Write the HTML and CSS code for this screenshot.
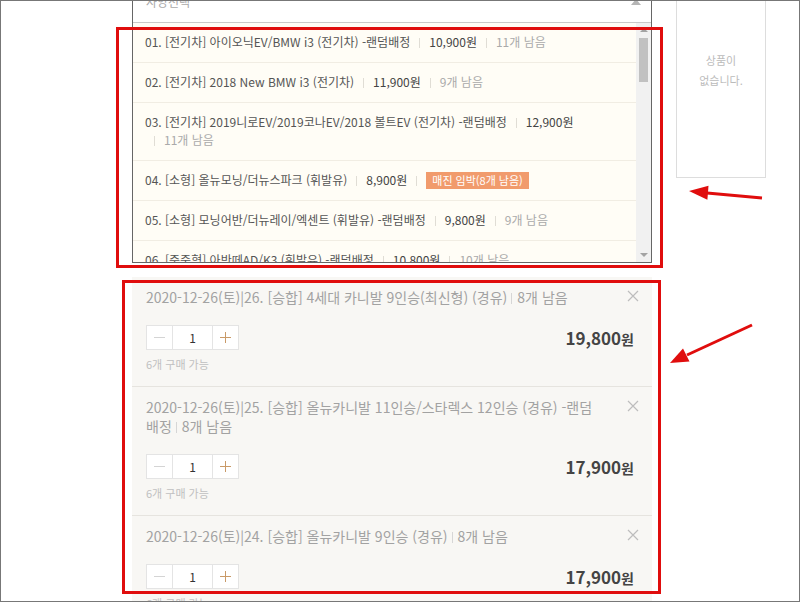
FILE: index.html
```html
<!DOCTYPE html>
<html lang="ko">
<head>
  <meta charset="UTF-8" />
  <meta name="viewport" content="width=device-width, initial-scale=1.0"/>
  <title>사양선택</title>
  <link rel="stylesheet" href="styles.css">
</head>
<body>
  <div class="frame">
    <div class="page">
      <div class="main">
        <div class="select">
          <div class="select-head">
            <span>사양선택</span>
            <span class="caret"></span>
          </div>
          <div class="list">
            <ul class="options">
              <li><span>01. [전기차] 아이오닉EV/BMW i3 (전기차) -랜덤배정</span><span class="price">10,900원</span><span class="stock">11개 남음</span></li>
              <li><span>02. [전기차] 2018 New BMW i3 (전기차)</span><span class="price">11,900원</span><span class="stock">9개 남음</span></li>
              <li><span>03. [전기차] 2019니로EV/2019코나EV/2018 볼트EV (전기차) -랜덤배정</span><span class="price">12,900원</span><span class="stock">11개 남음</span></li>
              <li><span>04. [소형] 올뉴모닝/더뉴스파크 (휘발유)</span><span class="price">8,900원</span><span class="hot"><em>매진 임박(8개 남음)</em></span></li>
              <li><span>05. [소형] 모닝어반/더뉴레이/엑센트 (휘발유) -랜덤배정</span><span class="price">9,800원</span><span class="stock">9개 남음</span></li>
              <li><span>06. [준중형] 아반떼AD/K3 (휘발유) -랜덤배정</span><span class="price">10,800원</span><span class="stock">10개 남음</span></li>
              <li><span>07. [준중형] 올뉴아반떼CN7 (휘발유)</span><span class="price">11,800원</span><span class="stock">7개 남음</span></li>
            </ul>
            <div class="scrollbar">
              <span class="arrow up"></span>
              <span class="thumb"></span>
              <span class="arrow down"></span>
            </div>
          </div>
        </div>

        <div class="picked">
          <div class="pick">
            <div class="pick-head">
              <p class="pick-title">2020-12-26(토)|26. [승합] 4세대 카니발 9인승(최신형) (경유)<span class="left">8개 남음</span></p>
              <button class="close"><svg width="12" height="12" viewBox="0 0 12 12"><path d="M1 1L11 11M11 1L1 11" stroke="#bdbdbd" stroke-width="1.2"/></svg></button>
            </div>
            <div class="pick-row">
              <div class="qty">
                <button class="minus"><svg width="11" height="11" viewBox="0 0 11 11"><path d="M0 5.5H11" stroke="#d4d4d4"/></svg></button>
                <input type="text" value="1">
                <button class="plus"><svg width="11" height="11" viewBox="0 0 11 11"><path d="M0 5.5H11M5.5 0V11" stroke="#c99a68"/></svg></button>
              </div>
              <div class="sum">19,800<small>원</small></div>
            </div>
            <p class="note">6개 구매 가능</p>
          </div>

          <div class="pick">
            <div class="pick-head">
              <p class="pick-title">2020-12-26(토)|25. [승합] 올뉴카니발 11인승/스타렉스 12인승 (경유) -랜덤배정<span class="left">8개 남음</span></p>
              <button class="close"><svg width="12" height="12" viewBox="0 0 12 12"><path d="M1 1L11 11M11 1L1 11" stroke="#bdbdbd" stroke-width="1.2"/></svg></button>
            </div>
            <div class="pick-row">
              <div class="qty">
                <button class="minus"><svg width="11" height="11" viewBox="0 0 11 11"><path d="M0 5.5H11" stroke="#d4d4d4"/></svg></button>
                <input type="text" value="1">
                <button class="plus"><svg width="11" height="11" viewBox="0 0 11 11"><path d="M0 5.5H11M5.5 0V11" stroke="#c99a68"/></svg></button>
              </div>
              <div class="sum">17,900<small>원</small></div>
            </div>
            <p class="note">6개 구매 가능</p>
          </div>

          <div class="pick">
            <div class="pick-head">
              <p class="pick-title">2020-12-26(토)|24. [승합] 올뉴카니발 9인승 (경유)<span class="left">8개 남음</span></p>
              <button class="close"><svg width="12" height="12" viewBox="0 0 12 12"><path d="M1 1L11 11M11 1L1 11" stroke="#bdbdbd" stroke-width="1.2"/></svg></button>
            </div>
            <div class="pick-row">
              <div class="qty">
                <button class="minus"><svg width="11" height="11" viewBox="0 0 11 11"><path d="M0 5.5H11" stroke="#d4d4d4"/></svg></button>
                <input type="text" value="1">
                <button class="plus"><svg width="11" height="11" viewBox="0 0 11 11"><path d="M0 5.5H11M5.5 0V11" stroke="#c99a68"/></svg></button>
              </div>
              <div class="sum">17,900<small>원</small></div>
            </div>
            <p class="note">6개 구매 가능</p>
          </div>
        </div>
      </div>

      <aside class="side">상품이<br>없습니다.</aside>
    </div>

    <!-- annotation marks drawn over the capture -->
    <svg class="marks" width="800" height="602" viewBox="0 0 800 602">
      <g fill="none" stroke="#e00d0d" stroke-width="3">
        <rect x="117.5" y="28.5" width="544" height="238"/>
        <rect x="123.5" y="281.5" width="536" height="311"/>
        <path d="M762 198L707 193"/>
        <path d="M752 325L687 355"/>
      </g>
      <g fill="#e00d0d">
        <polygon points="689,191 708.5,185.8 707.4,199.7"/>
        <polygon points="670,363 689.5,361.5 683,348.5"/>
      </g>
    </svg>
  </div>
</body>
</html>
```

FILE: styles.css
```css
body { margin: 0; background: #fff; }
.frame { position: relative; width: 800px; height: 602px; box-sizing: border-box; border: 1px solid #777; overflow: hidden; background: #fff; font-family: "Noto Sans CJK KR", "Noto Sans", sans-serif; }
.page { display: flex; align-items: flex-start; margin-top: -20px; padding-left: 131px; }
.main { width: 520px; }

.select { border: 1px solid #666; border-top: 0; background: #fff; }
.select-head { height: 41px; display: flex; align-items: center; justify-content: space-between; padding: 0 10px 0 13px; font-size: 12px; color: #aaa; }
.caret { width: 0; height: 0; border-left: 5px solid transparent; border-right: 5px solid transparent; border-bottom: 6px solid #b5b5b5; }
.list { display: flex; height: 239px; border-top: 1px solid #c9c9c9; background: #fffdf6; }
.options { flex: 1; list-style: none; margin: 0; padding: 0; overflow: hidden; }
.options li { padding: 10px 11px 11px 12px; font-size: 12px; line-height: 18px; color: #555; border-bottom: 1px solid #f1ede3; }
.options li span { white-space: nowrap; }
.options li span + span::before { content: ""; display: inline-block; width: 1px; height: 10px; margin: 0 9px; background: #e0ddd5; vertical-align: -1px; }
.options .price { color: #444; }
.options .stock { color: #aaa; }
.options .hot em { display: inline-block; padding: 0 6px; line-height: 17px; font-style: normal; font-size: 11px; color: #fff; background: #f19b6c; }

.scrollbar { width: 15px; display: flex; flex-direction: column; align-items: center; background: #f1f1f1; }
.arrow { width: 0; height: 0; margin: 5px 0; border-left: 4px solid transparent; border-right: 4px solid transparent; }
.arrow.up { border-bottom: 4px solid #a3a3a3; }
.arrow.down { margin-top: auto; border-top: 4px solid #a3a3a3; }
.thumb { width: 9px; height: 44px; margin-top: 1px; background: #c1c1c1; }

.picked { margin-top: 14px; background: #f8f7f4; }
.pick { padding: 11px 13px 13px 14px; border-bottom: 1px solid #e6e4df; }
.pick-head { display: flex; align-items: flex-start; }
.pick-title { flex: 1; margin: 0 28px 0 0; font-size: 14px; line-height: 19px; color: #a2a2a2; }
.pick-title .left::before { content: ""; display: inline-block; width: 1px; height: 11px; margin: 0 5px 0 4px; background: #d6d6d6; vertical-align: -1px; }
.close { border: 0; padding: 0; margin-top: 2px; background: none; line-height: 0; }
.pick-row { display: flex; align-items: center; justify-content: space-between; margin-top: 18px; }
.qty { display: flex; height: 25px; box-sizing: border-box; border: 1px solid #e4e4e4; background: #fff; }
.qty button { width: 25px; border: 0; padding: 0; background: #fff; line-height: 0; }
.qty input { width: 41px; box-sizing: border-box; border: 0; border-left: 1px solid #e4e4e4; border-right: 1px solid #e4e4e4; padding: 0; text-align: center; font-family: inherit; font-size: 12px; color: #333; }
.sum { margin-right: 5px; font-size: 17px; font-weight: bold; color: #444; }
.sum small { font-size: 14px; }
.note { margin: 6px 0 0; font-size: 11px; line-height: 17px; color: #c0c0c0; }

.side { box-sizing: border-box; width: 90px; height: 197px; margin-left: 24px; padding-top: 68px; border: 1px solid #ddd; text-align: center; font-size: 11px; line-height: 20px; color: #bbb; }

.marks { position: absolute; left: -1px; top: -1px; pointer-events: none; }
```
